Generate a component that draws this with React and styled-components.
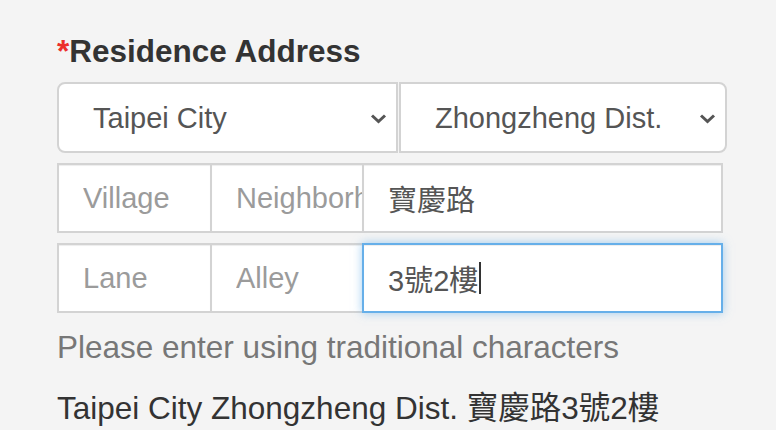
import React from "react"
import styled, { createGlobalStyle } from "styled-components"

const GlobalStyle = createGlobalStyle`
  html, body {
    margin: 0;
    padding: 0;
    background: #f4f4f4;
  }
  body {
    font-family: "Liberation Sans", "Noto Sans CJK TC", sans-serif;
  }
  * { box-sizing: border-box; }
`

const FONT = `"Liberation Sans", "Noto Sans CJK TC", sans-serif`

const Page = styled.div`
  padding: 33px 0 0 57px;
  width: 740px;
`

const Title = styled.h2`
  margin: 0;
  font-size: 31.5px;
  line-height: 36px;
  font-weight: bold;
  color: #333;
`

const Required = styled.span`
  color: #ec2f2b;
`

const SelectRow = styled.div`
  display: flex;
  margin-top: 13px;
`

const SelectBox = styled.div`
  position: relative;
  flex: none;
  width: ${p => p.$w}px;
  & + & { margin-left: 1px; }
`

const Select = styled.select`
  appearance: none;
  display: block;
  width: 100%;
  height: 71px;
  margin: 0;
  border: 2px solid #d3d3d3;
  border-radius: ${p => (p.$side === "left" ? "8px 0 0 8px" : "0 8px 8px 0")};
  background: #fff;
  padding: 0 0 0 34px;
  font-family: ${FONT};
  font-size: 29px;
  color: #555;
  outline: none;
`

// chevron sits over the select
const Chevron = styled.svg`
  position: absolute;
  right: 11px;
  top: 50%;
  margin-top: -5px;
  pointer-events: none;
`

const FieldRow = styled.div`
  display: flex;
  margin-top: 10px;
`

const Field = styled.input`
  flex: none;
  width: ${p => p.$w}px;
  height: 70px;
  margin: 0;
  border: 2px solid #d3d3d3;
  border-radius: 0;
  padding: 0 0 0 24px;
  background: #fff;
  font-family: ${FONT};
  font-size: 29px;
  color: #555;
  box-shadow: inset 0 1px 1px rgba(0, 0, 0, 0.075);
  outline: none;
  & + & { margin-left: -2px; }
  &::placeholder { color: #9b9b9b; }
`

const FocusField = styled(Field)`
  position: relative;
  z-index: 1;
  display: flex;
  align-items: center;
  border-color: #66afe9;
  box-shadow: inset 0 1px 1px rgba(0, 0, 0, 0.075), 0 0 9px rgba(102, 175, 233, 0.6);
`

const Caret = styled.span`
  display: inline-block;
  width: 2px;
  height: 32px;
  margin-left: 1px;
  background: #333;
`

const Help = styled.p`
  margin: 16px 0 0;
  font-size: 31.5px;
  line-height: 36px;
  color: #777;
`

const Summary = styled.p`
  margin: 25px 0 0;
  font-size: 31.5px;
  line-height: 36px;
  color: #333;
`

const Down = () => (
  <Chevron width="17" height="11" viewBox="0 0 17 11">
    <polyline points="2,2.5 8.5,8.5 15,2.5" fill="none" stroke="#555" strokeWidth="3" />
  </Chevron>
)

export default function App() {
  return (
    <Page>
      <GlobalStyle />
      <Title><Required>*</Required>Residence Address</Title>

      <SelectRow>
        <SelectBox $w={341}>
          <Select $side="left" defaultValue="taipei">
            <option value="taipei">Taipei City</option>
          </Select>
          <Down />
        </SelectBox>
        <SelectBox $w={328}>
          <Select $side="right" defaultValue="zz">
            <option value="zz">Zhongzheng Dist.</option>
          </Select>
          <Down />
        </SelectBox>
      </SelectRow>

      <FieldRow>
        <Field $w={155} placeholder="Village" />
        <Field $w={154} placeholder="Neighborhood" />
        <Field $w={361} defaultValue="寶慶路" />
      </FieldRow>

      <FieldRow>
        <Field $w={155} placeholder="Lane" />
        <Field $w={154} placeholder="Alley" />
        <FocusField as="div" $w={361}>3號2樓<Caret /></FocusField>
      </FieldRow>

      <Help>Please enter using traditional characters</Help>
      <Summary>Taipei City Zhongzheng Dist. 寶慶路3號2樓</Summary>
    </Page>
  )
}
